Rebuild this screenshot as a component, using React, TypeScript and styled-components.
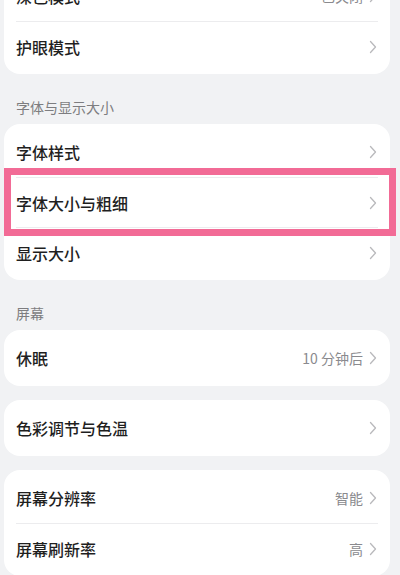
import React from 'react'
import styled, { createGlobalStyle } from 'styled-components'

const Global = createGlobalStyle`
  html, body {
    margin: 0;
    padding: 0;
    background: #f1f2f4;
    overflow: hidden;
  }
  body {
    font-family: "Noto Sans CJK SC", "Noto Sans", sans-serif;
  }
`

type Item = { label: string; value?: string; highlight?: boolean }

const Chevron = () => (
  <svg width="8" height="14" viewBox="0 0 8 14" fill="none">
    <path d="M1.5 1.5 L6.5 7 L1.5 12.5" stroke="#b9b9bc" strokeWidth="1.3" strokeLinecap="round" strokeLinejoin="round" />
  </svg>
)

const Group = ({ items }: { items: Item[] }) => (
  <Card>
    {items.map((it, i) => (
      <Row key={it.label} $first={i === 0}>
        <Label>{it.label}</Label>
        <Right>
          {it.value && <Value>{it.value}</Value>}
          <Chevron />
        </Right>
        {it.highlight && <Highlight />}
      </Row>
    ))}
  </Card>
)

const App = () => {
  return (
    <Page>
      <Global />
      <Content>
        <Group items={[{ label: '深色模式', value: '已关闭' }, { label: '护眼模式' }]} />
        <Header>字体与显示大小</Header>
        <Group
          items={[
            { label: '字体样式' },
            { label: '字体大小与粗细', highlight: true },
            { label: '显示大小' },
          ]}
        />
        <Header>屏幕</Header>
        <Group items={[{ label: '休眠', value: '10 分钟后' }]} />
        <Gap />
        <Group items={[{ label: '色彩调节与色温' }]} />
        <Gap />
        <Group
          items={[
            { label: '屏幕分辨率', value: '智能' },
            { label: '屏幕刷新率', value: '高' },
          ]}
        />
      </Content>
    </Page>
  )
}

export default App

const Page = styled.div`
  width: 400px;
  height: 575px;
  box-sizing: border-box;
  padding: 0 10px 0 4px;
  overflow: hidden;
`

/* the list is scrolled, so the first row sits partly above the window */
const Content = styled.div`
  display: flex;
  flex-direction: column;
  margin-top: -32px;
`

const Card = styled.div`
  background: #ffffff;
  border-radius: 16px;
  padding: 3px 12px;
  flex-shrink: 0;
`

const Row = styled.div<{ $first: boolean }>`
  position: relative;
  height: 50px;
  display: flex;
  align-items: center;
  justify-content: space-between;
  border-top: ${p => (p.$first ? 'none' : '1px solid #ececee')};
  box-sizing: border-box;
`

const Label = styled.div`
  font-size: 16px;
  font-weight: 500;
  color: #1f1f1f;
`

const Right = styled.div`
  display: flex;
  align-items: center;
  gap: 6px;
  padding-right: 1px;
`

const Value = styled.div`
  font-size: 14px;
  color: #8a8a8e;
`

const Header = styled.div`
  font-size: 14px;
  color: #7d7d80;
  padding: 23px 0 0 12px;
  height: 27px;
  line-height: 20px;
  flex-shrink: 0;
`

const Gap = styled.div`
  height: 14px;
  flex-shrink: 0;
`

const Highlight = styled.div`
  position: absolute;
  left: -12px;
  right: -18px;
  top: -10px;
  bottom: -9px;
  border: 7.5px solid #f26b96;
  pointer-events: none;
`
